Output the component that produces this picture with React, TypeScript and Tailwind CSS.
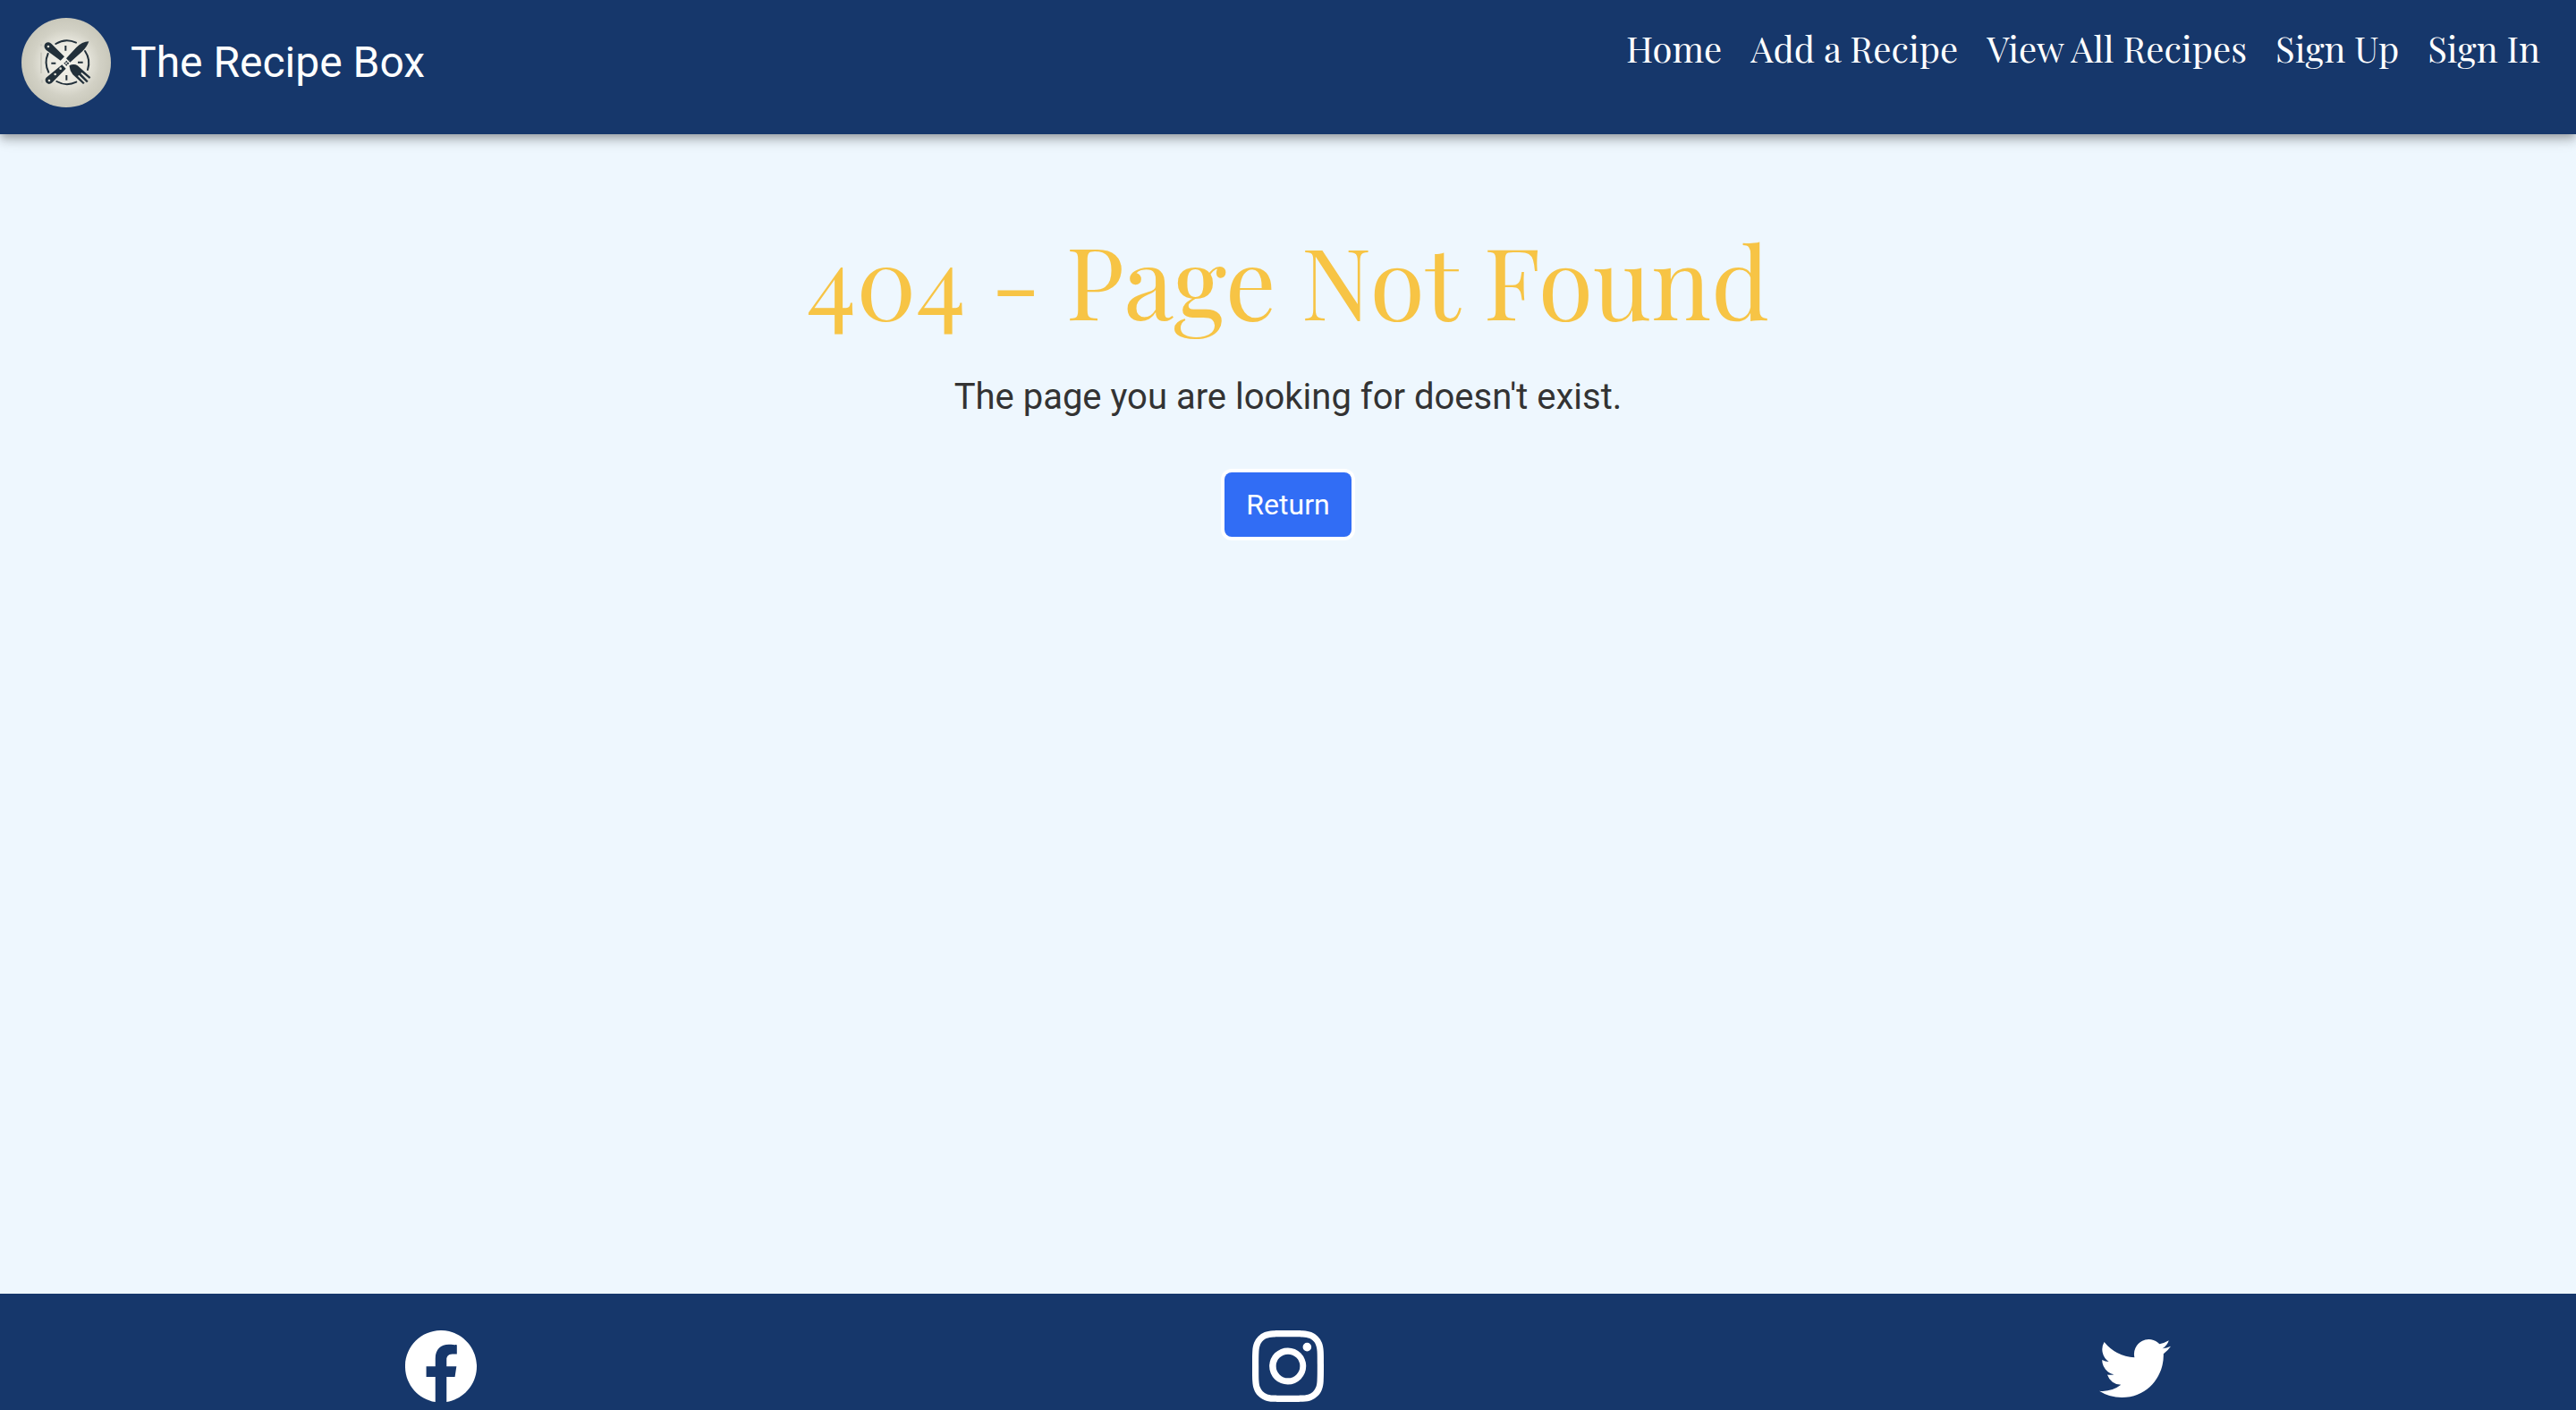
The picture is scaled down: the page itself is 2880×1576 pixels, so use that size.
import React from "react";
import { BsFacebook, BsInstagram, BsTwitter } from "react-icons/bs";

const links = ["Home", "Add a Recipe", "View All Recipes", "Sign Up", "Sign In"];

const socials = [
  { name: "Facebook", Icon: BsFacebook },
  { name: "Instagram", Icon: BsInstagram },
  { name: "Twitter", Icon: BsTwitter },
];

function Logo() {
  return (
    <svg viewBox="30 30 300 300" className="size-[100px] shrink-0" aria-hidden="true">
      <defs>
        <radialGradient id="plate" cx="50%" cy="50%" r="50%">
          <stop offset="0" stopColor="#f4f3ec" />
          <stop offset="0.45" stopColor="#e9e8df" />
          <stop offset="0.75" stopColor="#d2d1c5" />
          <stop offset="1" stopColor="#c9c8bb" />
        </radialGradient>
      </defs>
      <circle cx="180" cy="180" r="150" fill="url(#plate)" />
      <path d="M96 146V216M99 238v10M96 118v6" stroke="#c4c4ba" strokeWidth="4" fill="none" />
      <g fill="none" stroke="#22303a" strokeWidth="6" strokeLinecap="round">
        <path d="M145 117A72 72 0 0 1 213 113" />
        <path d="M119 150A72 72 0 0 0 121 212" />
        <path d="M243 141A72 72 0 0 1 252 204" />
        <path d="M148 243A72 72 0 0 0 214 245" />
        <path d="M178 123v17M181 222v17M130 182h15M219 179h17" strokeLinecap="butt" strokeWidth="6" />
      </g>
      <g fill="#22303a">
        <path d="M180 166L214 129Q233 110 256 109Q250 128 233 143L193 179Z" />
        <path d="M110 134A12 12 0 0 1 130 116L174 160L161 173L113 138Z" />
        <path d="M172 182L181 173L190 182L181 191Z" />
        <path d="M166 187L179 200L133 247A13 13 0 0 1 113 230Z" />
        <path d="M190 190Q206 182 218 190L262 229L258 234L232 213L229 216L254 242L249 247L223 222L219 225L242 248L237 252L202 220Q192 207 190 190Z" />
      </g>
      <path d="M171 173L189 191M189 173L171 191" stroke="#f0efe8" strokeWidth="3" />
      <g fill="#e0dfd6">
        <circle cx="120" cy="126" r="4" />
        <circle cx="123" cy="240" r="4" />
        <circle cx="143" cy="219" r="4" />
        <circle cx="161" cy="200" r="4" />
      </g>
    </svg>
  );
}

export default function App() {
  return (
    <div className="flex min-h-screen flex-col bg-[#eef7fe] font-['Roboto',sans-serif] text-[#333333]">
      <header className="relative flex items-start justify-between bg-[#16376b] pt-5 pr-10 pb-[30px] pl-6 text-white shadow-[0_4px_8px_-2px_rgba(0,0,0,0.2),0_8px_10px_0_rgba(0,0,0,0.14),0_2px_20px_0_rgba(0,0,0,0.12)]">
        <a href="#" className="flex items-center gap-[22px]">
          <Logo />
          <span className="text-[48px] leading-[60px]">The Recipe Box</span>
        </a>
        <nav className="flex gap-8 pt-[6px] font-['Playfair_Display','Liberation_Serif',serif] text-[40px] leading-[56px]">
          {links.map((label) => (
            <a key={label} href="#" className="whitespace-nowrap">
              {label}
            </a>
          ))}
        </nav>
      </header>

      <main className="flex flex-1 flex-col items-center pt-[88px] text-center">
        <h1 className="font-['Playfair_Display','Liberation_Serif',serif] text-[112px] leading-[148px] text-[#f7c445]">
          404 - Page Not Found
        </h1>
        <p className="mt-7 text-[40px] leading-[60px]">The page you are looking for doesn't exist.</p>
        <button
          type="button"
          className="mt-[54px] rounded-lg bg-[#316df5] px-6 py-3 text-[32px] leading-[48px] text-white ring-4 ring-white"
        >
          Return
        </button>
      </main>

      <footer className="grid grid-cols-3 justify-items-center bg-[#16376b] px-5 pt-[41px] pb-[9px] text-white">
        {socials.map(({ name, Icon }) => (
          <a key={name} href="#" aria-label={name}>
            <Icon className="size-20" />
          </a>
        ))}
      </footer>
    </div>
  );
}
